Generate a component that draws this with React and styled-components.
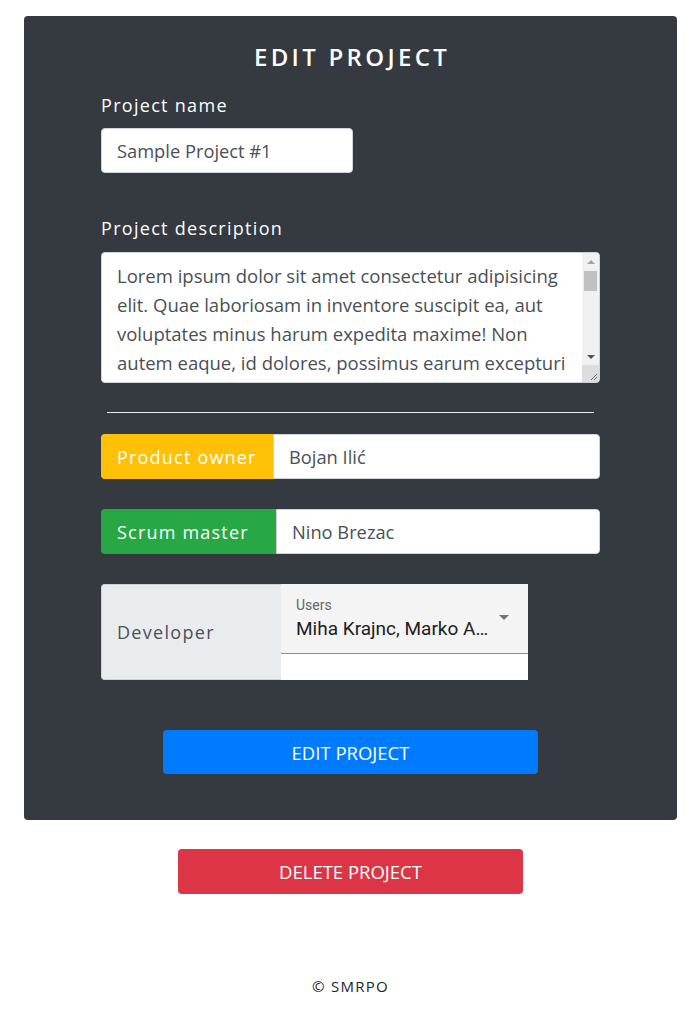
import React from 'react';
import styled, { createGlobalStyle } from 'styled-components';

const GlobalStyle = createGlobalStyle`
  body {
    margin: 0;
    background: #fff;
    font-family: 'Open Sans', 'Noto Sans', sans-serif;
  }
`;

// Contenedor de la página
const Page = styled.div`
  padding: 16px 23px 0 24px;
  display: flex;
  flex-direction: column;
  align-items: center;
`;

// Tarjeta oscura con el formulario
const Card = styled.div`
  width: 100%;
  box-sizing: border-box;
  background: #343a40;
  border-radius: 4px;
  padding: 27px 77px 46px;
  display: flex;
  flex-direction: column;
`;

const Title = styled.h1`
  margin: 0 0 21px;
  padding-left: 3px;
  font-size: 24px;
  line-height: 28px;
  font-weight: 600;
  letter-spacing: 3.3px;
  color: #fff;
  text-align: center;
`;

const Label = styled.label`
  display: block;
  font-size: 18px;
  line-height: 27px;
  letter-spacing: 1.3px;
  color: #fff;
  margin-bottom: ${props => props.$mb || 9}px;
`;

const Input = styled.input`
  box-sizing: border-box;
  width: ${props => props.$width || '100%'};
  height: 45px;
  padding: 0 15px;
  border: 1px solid #ced4da;
  border-radius: 4px;
  font-family: inherit;
  font-size: 18.3px;
  color: #495057;
  background: #fff;
  outline: none;
`;

const Field = styled.div`
  margin-bottom: ${props => props.$mb || 0}px;
`;

// Área de texto con barra de desplazamiento dibujada
const TextareaFrame = styled.div`
  display: flex;
  height: 131px;
  box-sizing: border-box;
  border: 1px solid #ced4da;
  border-radius: 4px;
  overflow: hidden;
  background: #fff;
`;

const Textarea = styled.textarea`
  box-sizing: border-box;
  flex: 1;
  min-width: 0;
  height: 100%;
  padding: 8px 15px;
  border: 0;
  font-family: inherit;
  font-size: 18.5px;
  line-height: 29px;
  color: #495057;
  outline: none;
  resize: none;
  overflow: hidden;
`;

const ScrollTrack = styled.div`
  flex: 0 0 17px;
  display: flex;
  flex-direction: column;
  background: #f1f1f1;
`;

const ScrollButton = styled.div`
  height: 17px;
  display: flex;
  align-items: center;
  justify-content: center;
`;

const Triangle = styled.span`
  width: 0;
  height: 0;
  border-left: 4px solid transparent;
  border-right: 4px solid transparent;
  ${props => props.$up
    ? 'border-bottom: 4px solid #a3a3a3;'
    : 'border-top: 4px solid #505050;'}
`;

const Thumb = styled.div`
  height: 20px;
  margin: 1px 2px 0;
  background: #c1c1c1;
`;

const ScrollSpacer = styled.div`
  flex: 1;
`;

const Corner = styled.div`
  height: 17px;
  background: #dcdcdc;
  display: flex;
  align-items: flex-end;
  justify-content: flex-end;
`;

const Divider = styled.hr`
  margin: 29px 6px 21px;
  border: 0;
  border-top: 1px solid #e9ecef;
`;

const Group = styled.div`
  display: flex;
  height: ${props => props.$height || 45}px;
  margin-bottom: ${props => props.$mb || 0}px;
`;

const Prepend = styled.span`
  box-sizing: border-box;
  flex: 0 0 ${props => props.$width}px;
  display: flex;
  align-items: center;
  padding-left: 15px;
  font-size: 18px;
  letter-spacing: ${props => props.$spacing || 1.2}px;
  color: ${props => props.$color || '#fff'};
  background: ${props => props.$bg};
  border: 1px solid ${props => props.$border || props.$bg};
  border-right: 0;
  border-radius: 4px 0 0 4px;
`;

const GroupInput = styled.input`
  box-sizing: border-box;
  flex: 1;
  min-width: 0;
  height: 100%;
  padding: 0 15px;
  border: 1px solid #ced4da;
  border-radius: 0 4px 4px 0;
  font-family: inherit;
  font-size: 18.3px;
  color: #495057;
  outline: none;
`;

// Selector de estilo Material
const SelectBox = styled.div`
  flex: 0 0 247px;
  min-width: 0;
  display: flex;
  flex-direction: column;
  background: #fff;
  font-family: Roboto, sans-serif;
`;

const SelectFilled = styled.div`
  position: relative;
  height: 70px;
  box-sizing: border-box;
  background: #f4f4f4;
  border-bottom: 1px solid #8c8c8c;
  padding: 12px 36px 0 15px;
`;

const SelectLabel = styled.div`
  font-size: 14px;
  line-height: 18px;
  color: #666;
`;

const SelectValue = styled.div`
  font-size: 19px;
  line-height: 30px;
  color: #212121;
  white-space: nowrap;
`;

const Arrow = styled.svg`
  position: absolute;
  right: 12px;
  top: 21px;
  width: 24px;
  height: 24px;
  fill: #757575;
`;

const ButtonRow = styled.div`
  display: flex;
  justify-content: center;
  margin-top: ${props => props.$mt || 0}px;
`;

const Button = styled.button`
  width: ${props => props.$width}px;
  height: ${props => props.$height || 45}px;
  border: 0;
  border-radius: 4px;
  font-family: inherit;
  font-size: 18.5px;
  color: #fff;
  cursor: pointer;
  background: ${props => props.$variant === 'danger' ? '#dc3545' : '#007bff'};
`;

const Footer = styled.footer`
  margin-top: 82px;
  font-size: 15px;
  letter-spacing: 1.3px;
  color: #212529;
  text-align: center;
`;

const descripcion = 'Lorem ipsum dolor sit amet consectetur adipisicing elit. Quae laboriosam in inventore suscipit ea, aut voluptates minus harum expedita maxime! Non autem eaque, id dolores, possimus earum excepturi eveniet quibusdam ratione nihil.';

const App = () => {
  return (
    <>
      <GlobalStyle />
      <Page>
        <Card>
          <Title>EDIT PROJECT</Title>
          <Field $mb={42}>
            <Label>Project name</Label>
            <Input $width="252px" defaultValue="Sample Project #1" />
          </Field>
          <Field>
            <Label $mb={10}>Project description</Label>
            <TextareaFrame>
              <Textarea defaultValue={descripcion} />
              <ScrollTrack>
                <ScrollButton><Triangle $up /></ScrollButton>
                <Thumb />
                <ScrollSpacer />
                <ScrollButton><Triangle /></ScrollButton>
                <Corner>
                  <svg width="11" height="11" viewBox="0 0 11 11">
                    <path d="M9 3L3 9M9 6L6 9" stroke="#6e6e6e" strokeWidth="1" fill="none" />
                  </svg>
                </Corner>
              </ScrollTrack>
            </TextareaFrame>
          </Field>
          <Divider />
          <Group $mb={30}>
            <Prepend $width={172} $bg="#ffc107">Product owner</Prepend>
            <GroupInput defaultValue="Bojan Ilić" />
          </Group>
          <Group $mb={30}>
            <Prepend $width={175} $bg="#28a745">Scrum master</Prepend>
            <GroupInput defaultValue="Nino Brezac" />
          </Group>
          <Group $height={96}>
            <Prepend $width={180} $bg="#e9ecef" $border="#ced4da" $color="#495057" $spacing={1.3}>Developer</Prepend>
            <SelectBox>
              <SelectFilled>
                <SelectLabel>Users</SelectLabel>
                <SelectValue>Miha Krajnc, Marko A…</SelectValue>
                <Arrow viewBox="0 0 24 24"><path d="M7 10l5 5 5-5z" /></Arrow>
              </SelectFilled>
            </SelectBox>
          </Group>
          <ButtonRow $mt={50}>
            <Button $width={375} $height={44}>EDIT PROJECT</Button>
          </ButtonRow>
        </Card>
        <ButtonRow $mt={29}>
          <Button $width={345} $variant="danger">DELETE PROJECT</Button>
        </ButtonRow>
        <Footer>© SMRPO</Footer>
      </Page>
    </>
  );
};

export default App;
